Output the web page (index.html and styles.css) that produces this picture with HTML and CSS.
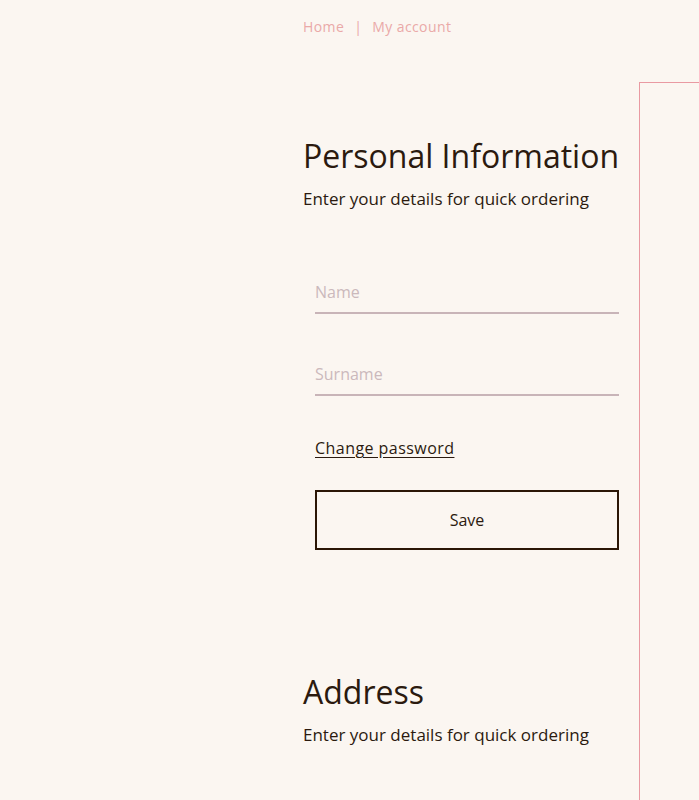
FILE: index.html
```html
<!DOCTYPE html>
<html lang="en">
<head>
<meta charset="utf-8">
<title>My account</title>
<link rel="stylesheet" href="styles.css">
</head>
<body>
<nav class="breadcrumb">
  <a class="crumb" href="#">Home</a>
  <span class="sep">|</span>
  <a class="crumb" href="#">My account</a>
</nav>
<div class="layout">
  <main class="main">
    <section class="section">
      <h1 class="title">Personal Information</h1>
      <p class="subtitle">Enter your details for quick ordering</p>
      <form class="form">
        <input class="field" type="text" placeholder="Name">
        <input class="field" type="text" placeholder="Surname">
        <a class="link" href="#">Change password</a>
        <button class="btn" type="button">Save</button>
      </form>
    </section>
    <section class="section section-address">
      <h1 class="title">Address</h1>
      <p class="subtitle">Enter your details for quick ordering</p>
    </section>
  </main>
  <aside class="aside"></aside>
</div>
</body>
</html>
```
FILE: styles.css
```css
* { box-sizing: border-box; }
html, body { margin: 0; padding: 0; }
body {
  background: #fbf6f1;
  font-family: "Open Sans", "Liberation Sans", sans-serif;
  color: #2b1a0f;
  height: 800px;
  overflow: hidden;
}
.breadcrumb {
  padding: 17px 0 0 303px;
  font-size: 14px;
  line-height: 20px;
  height: 82px;
  letter-spacing: 0.4px;
  display: flex;
  align-items: flex-start;
}
.crumb { color: #eaa9a8; text-decoration: none; }
.sep { color: #eaa9a8; margin: 0 10px; }
.layout {
  display: flex;
  gap: 20px;
  padding-left: 303px;
  height: 718px;
}
.main {
  width: 316px;
  flex: none;
  padding-top: 54px;
}
.title {
  margin: 0;
  font-size: 32px;
  line-height: 40px;
  font-weight: 400;
  white-space: nowrap;
}
.subtitle {
  margin: 11px 0 0;
  font-size: 17px;
  line-height: 24px;
  letter-spacing: 0;
  white-space: nowrap;
}
.form {
  display: flex;
  flex-direction: column;
  align-items: stretch;
  padding-left: 12px;
  margin-top: 61px;
}
.field {
  height: 42px;
  border: none;
  border-bottom: 2px solid #c8b4b8;
  background: transparent;
  font-family: inherit;
  font-size: 16px;
  color: #2b1a0f;
  padding: 0;
  outline: none;
}
.field + .field { margin-top: 40px; }
.field::placeholder { color: #cbb9bc; }
.link {
  margin-top: 40px;
  align-self: flex-start;
  font-size: 16px;
  line-height: 24px;
  color: #2b1a0f;
  letter-spacing: 0.45px;
  text-decoration: underline;
  text-underline-offset: 3px;
}
.btn {
  margin-top: 30px;
  height: 60px;
  border: 2px solid #2b1606;
  background: transparent;
  font-family: inherit;
  font-size: 16px;
  color: #2b1a0f;
}
.section-address { margin-top: 122px; }
.aside {
  flex: 1;
  border-top: 1px solid #e99aa2;
  border-left: 1px solid #e99aa2;
}
```
